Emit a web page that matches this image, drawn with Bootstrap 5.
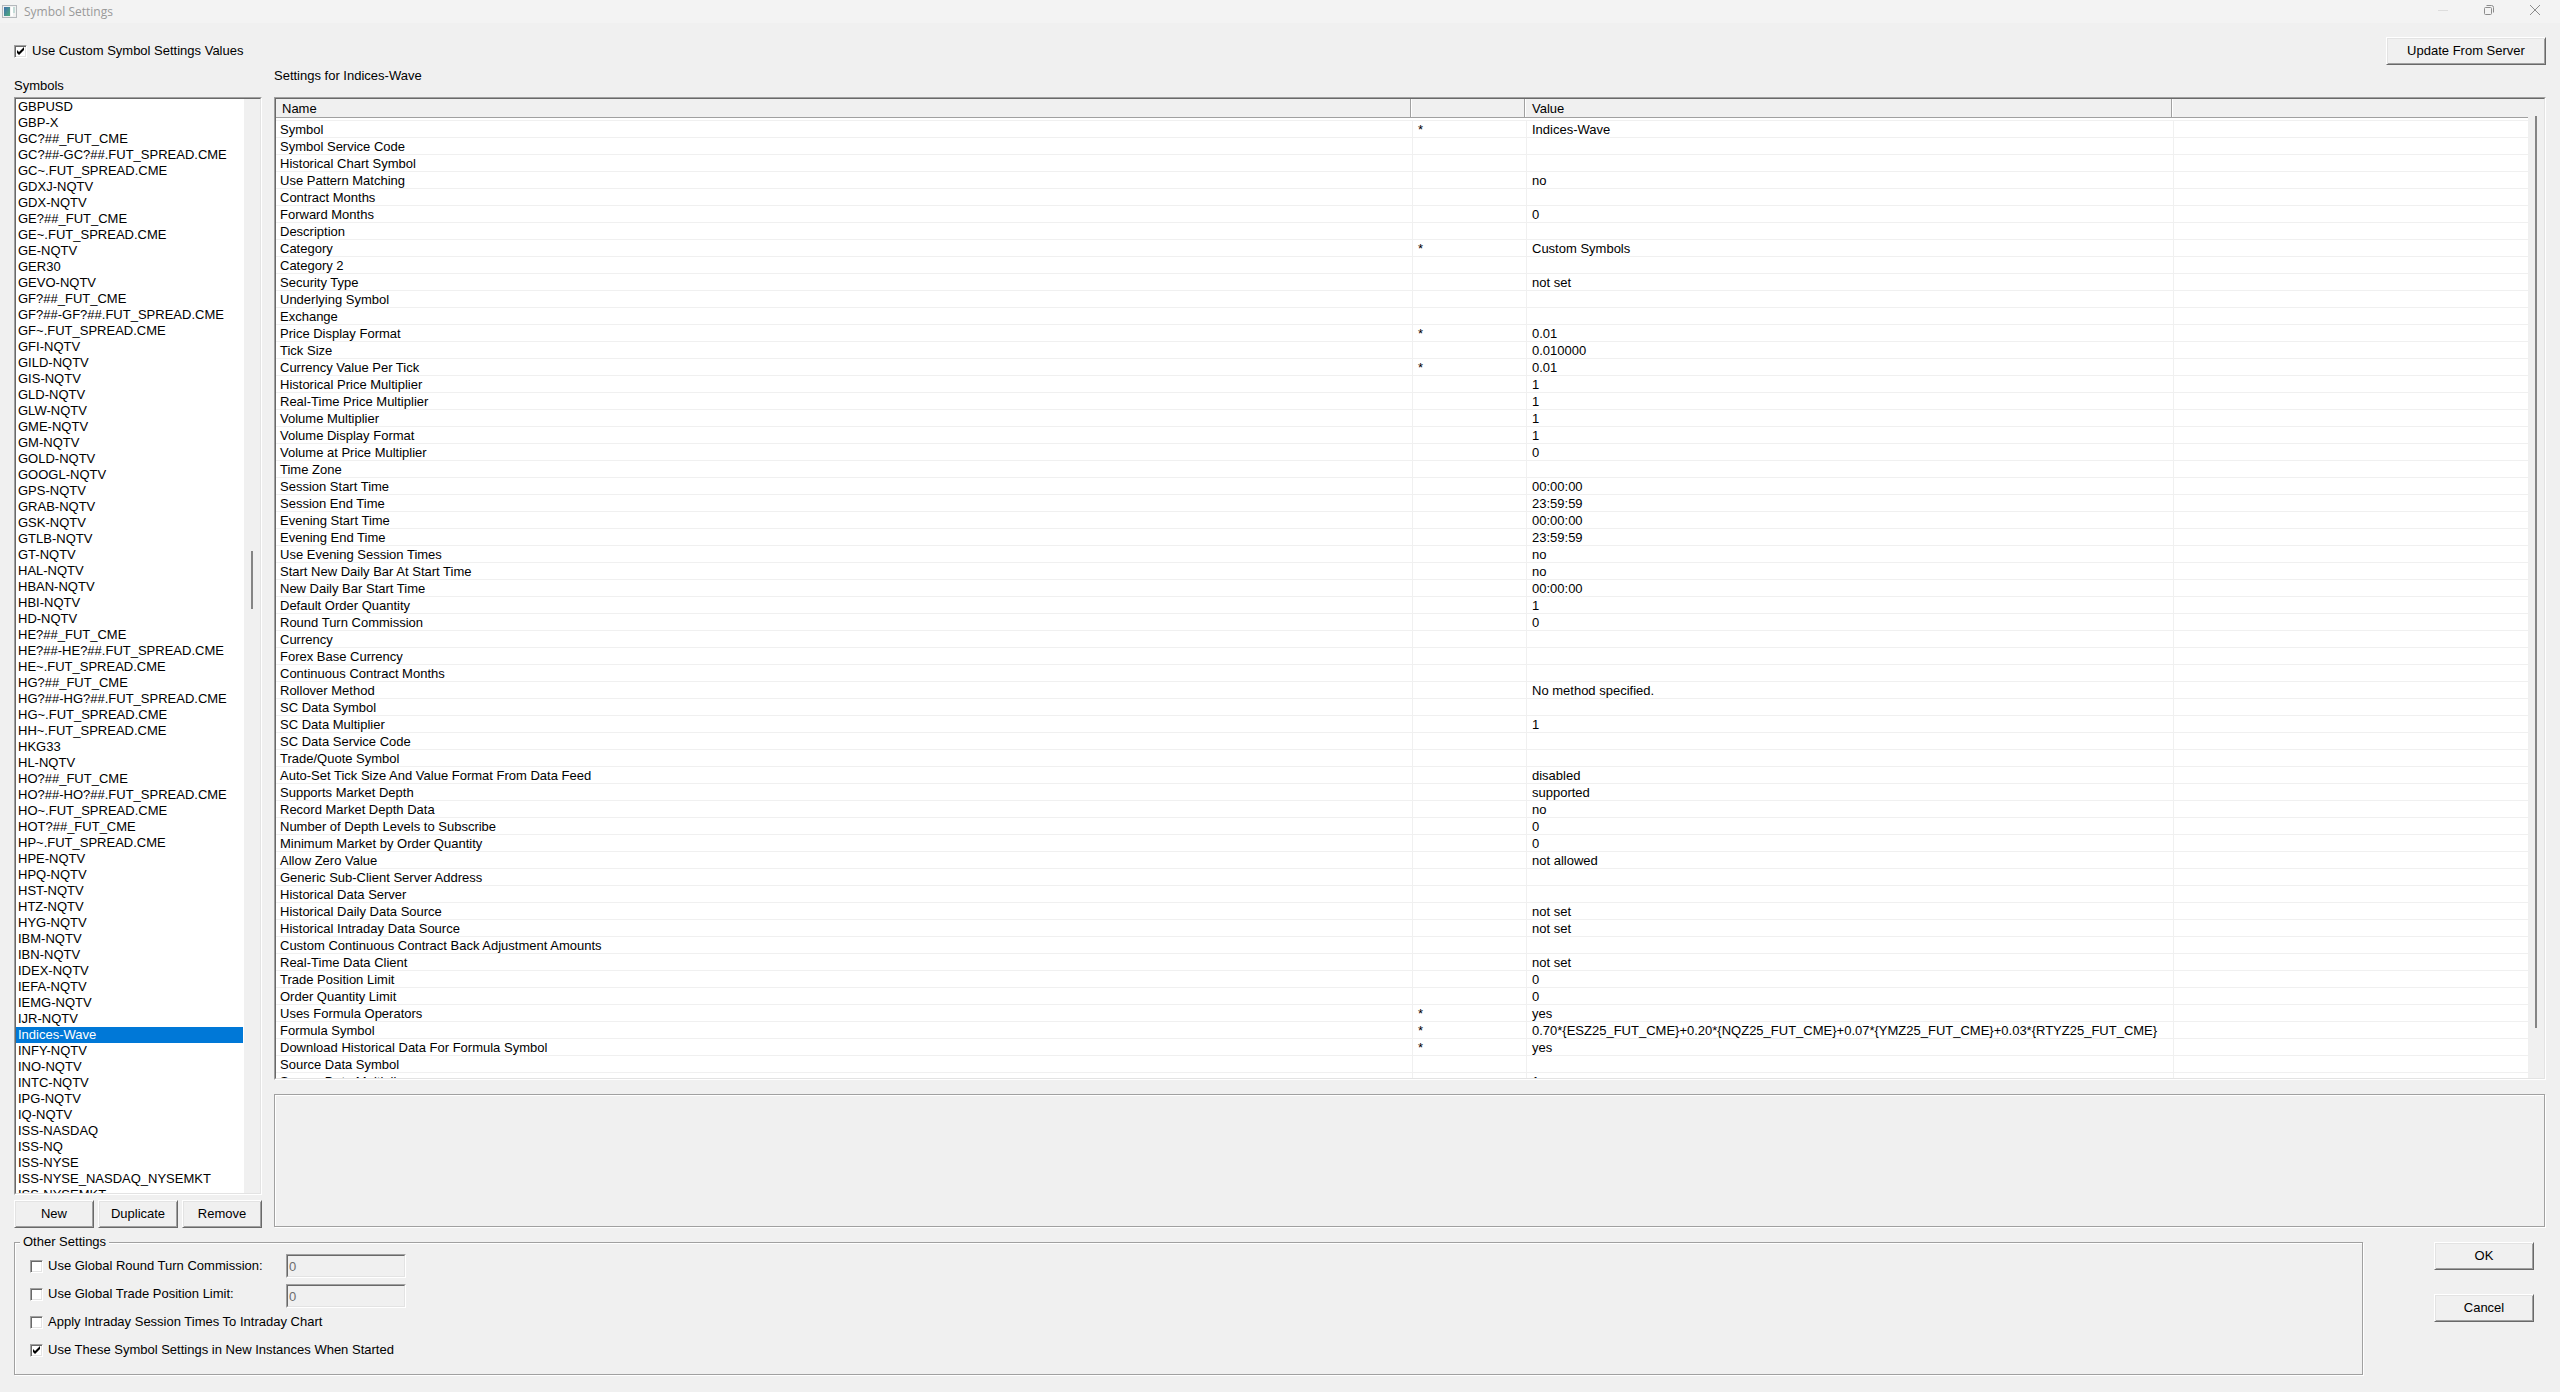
<!DOCTYPE html>
<html lang="en">
<head>
<meta charset="utf-8">
<meta name="viewport" content="width=device-width, initial-scale=1">
<title>Symbol Settings</title>
<link rel="stylesheet" href="https://cdn.jsdelivr.net/npm/bootstrap@5.3.0/dist/css/bootstrap.min.css">
<style>
body{font-family:"Liberation Sans",Arial,sans-serif;font-size:13px;line-height:16px;color:#000;background:#f0f0f0;overflow:hidden}
.titlebar{height:23px;background:#f3f3f3;color:#999;font-family:"Open Sans",sans-serif;font-size:12px;padding:0 2px;gap:6px}
.win-btns{height:20px}
.win-btn{border:0;background:none;padding:0;width:46px}
.toprow{height:51px;padding:14px 14px 0}
.top-label{gap:5px;padding-top:6px}
.btn-update{width:160px}
.main-area{padding:0 14px;gap:12px;min-height:0}
.left-pane{width:248px}
.pane-fill{min-height:0;min-width:0}
.cap-wrap{height:23px}
.cap-left{padding-top:4px}
.cap-right{margin-top:-6px}
.sunken{border:1px solid;border-color:#a0a0a0 #fff #fff #a0a0a0}
.sunken-in{border:1px solid;border-color:#696969 #e3e3e3 #e3e3e3 #696969}
.btn-win{font:inherit;color:#000;background:#f0f0f0;height:28px;padding:0 4px;border:1px solid;border-color:#fff #696969 #696969 #fff;box-shadow:inset 1px 1px #e3e3e3,inset -1px -1px #a0a0a0;border-radius:0}
.btn-win:active{background:#e8e8e8}
.list-btns{margin-top:5px}
.symbol-list{appearance:none;border:0;outline:0;background:#fff;border-radius:0;padding:0;margin:0;font:inherit;color:#000;overflow:hidden}
.symbol-list option{height:16px;min-height:16px;line-height:16px;padding:0 2px;margin-right:1px}
.symbol-list option:checked{background:#0078d7 linear-gradient(#0078d7,#0078d7);color:#fff !important}
.track{width:16px;background:#f0f0f0;position:relative}
.thumb{position:absolute;left:7px;width:2px;background:#858585}
.thumb-list{top:452px;height:58px}
.thumb-grid{top:17px;height:912px}
.grid-view{overflow:hidden;background:#fff}
.settings-table{table-layout:fixed;width:100%;border-collapse:separate;border-spacing:0}
.col-name{width:1137px}
.col-mark{width:114px}
.col-value{width:647px}
.settings-table th{font-weight:400;height:19px;padding:2px 0 0 5px;background:#f0f0f0;border-bottom:1px solid #a0a0a0;line-height:16px;box-shadow:inset -1px 0 #f0f0f0,inset -2px 0 #fff,inset -3px 0 #a0a0a0}
.settings-table th:first-child{padding-left:6px}
.settings-table th:last-child{box-shadow:none}
.settings-table td{height:17px;line-height:14px;padding:2px 5px 0;border-bottom:1px solid #f0f0f0;border-right:1px solid #f0f0f0;white-space:nowrap}
.settings-table td:first-child{padding-left:4px}
.settings-table td:last-child{border-right:0}
.settings-table .lead-row td{height:3px;line-height:0;padding:0;border-right:0}
.etched{border:1px solid #a0a0a0;box-shadow:1px 1px #fff,inset 1px 1px #fff}
.desc-box{height:133px;margin:14px 1px 1px 0}
.footer-area{padding:14px 26px 17px 14px}
.groupbox{height:133px;padding:9px 15px 0;margin:0;position:relative}
.groupbox legend{position:absolute;left:5px;top:-9px;width:auto;float:none;margin:0;padding:0 3px;font-size:13px;line-height:16px;background:#f0f0f0}
.opt-row{height:28px}
.opt-label{width:256px;gap:5px}
.opt-label.wide{width:auto}
.tick{appearance:none;width:13px;height:13px;margin:0;border:1px solid;border-color:#a0a0a0 #fff #fff #a0a0a0;background:#fff;box-shadow:inset 1px 1px #696969,inset -1px -1px #e3e3e3;flex:none}
.tick:checked{background:#fff url("data:image/svg+xml,%3Csvg xmlns='http://www.w3.org/2000/svg' viewBox='0 0 11 11'%3E%3Cpath d='M2 4v3l2 2 5-5V1L4 6z' fill='%23000'/%3E%3C/svg%3E") center/11px no-repeat}
.num-box{width:118px;height:22px;font:inherit;color:#6d6d6d;background:#f0f0f0;border:1px solid;border-color:#696969 #e3e3e3 #e3e3e3 #696969;outline:0;padding:0 1px}
.side-btns{width:100px;gap:24px;margin-left:71px}
</style>
<script src="https://cdn.jsdelivr.net/npm/bootstrap@5.3.0/dist/js/bootstrap.bundle.min.js"></script>
</head>
<body class="vh-100 d-flex flex-column">
<header class="titlebar d-flex align-items-center flex-shrink-0">
  <svg width="16" height="14" viewBox="0 0 16 14" aria-hidden="true"><defs><linearGradient id="g" x2="1" y2="1"><stop stop-color="#3f6fae"/><stop offset="1" stop-color="#4fae7b"/></linearGradient></defs><rect x=".5" y=".5" width="14" height="12" fill="#f1f1f1" stroke="#b4b8bc"/><rect x="2" y="2" width="6" height="9" fill="url(#g)"/><rect x="9" y="2" width="2" height="9" fill="#fff"/><rect x="11" y="2" width="2" height="6" fill="#c4dcd8"/></svg>
  <span class="flex-grow-1">Symbol Settings</span>
  <div class="win-btns d-flex align-self-start">
    <button class="win-btn d-flex justify-content-center align-items-center" aria-label="Minimize" disabled><svg width="10" height="10"><path d="M0 5.500h10" stroke="#ddd"/></svg></button>
    <button class="win-btn d-flex justify-content-center align-items-center" aria-label="Restore"><svg width="10" height="10" fill="none" stroke="#8c8c8c"><rect x=".5" y="2.500" width="7" height="7" rx="1"/><path d="M2.500 .5h5a2 2 0 0 1 2 2v5"/></svg></button>
    <button class="win-btn d-flex justify-content-center align-items-center" aria-label="Close"><svg width="10" height="10" stroke="#8c8c8c"><path d="M0 0l10 10M10 0L0 10"/></svg></button>
  </div>
</header>

<div class="toprow d-flex justify-content-between align-items-start flex-shrink-0">
  <label class="top-label d-flex align-items-center"><input class="tick" type="checkbox" checked>Use Custom Symbol Settings Values</label>
  <button class="btn-win btn-update">Update From Server</button>
</div>

<main class="main-area d-flex flex-grow-1">
  <section class="left-pane d-flex flex-column flex-shrink-0">
    <div class="cap-wrap flex-shrink-0"><label class="d-block cap-left" for="symbols">Symbols</label></div>
    <div class="sunken pane-fill flex-grow-1 d-flex">
      <div class="sunken-in d-flex flex-grow-1">
        <select class="symbol-list flex-grow-1 h-100" id="symbols" size="70"></select>
        <div class="track"><div class="thumb thumb-list"></div></div>
      </div>
    </div>
    <div class="list-btns d-flex gap-1 flex-shrink-0">
      <button class="btn-win flex-fill w-100">New</button>
      <button class="btn-win flex-fill w-100">Duplicate</button>
      <button class="btn-win flex-fill w-100">Remove</button>
    </div>
  </section>
  <section class="pane-fill d-flex flex-column flex-grow-1">
    <div class="cap-wrap flex-shrink-0"><div class="cap-right">Settings for Indices-Wave</div></div>
    <div class="sunken pane-fill flex-grow-1 d-flex">
      <div class="sunken-in pane-fill d-flex flex-grow-1">
        <div class="grid-view flex-grow-1">
          <table class="settings-table">
            <colgroup><col class="col-name"><col class="col-mark"><col class="col-value"><col></colgroup>
            <thead><tr><th>Name</th><th></th><th>Value</th><th></th></tr></thead>
            <tbody id="rows"><tr class="lead-row"><td colspan="4"></td></tr></tbody>
          </table>
        </div>
        <div class="track flex-shrink-0"><div class="thumb thumb-grid"></div></div>
      </div>
    </div>
    <div class="desc-box etched flex-shrink-0"></div>
  </section>
</main>

<footer class="footer-area d-flex flex-shrink-0">
  <fieldset class="groupbox etched flex-grow-1">
    <legend>Other Settings</legend>
    <div class="opt-row d-flex"><label class="opt-label d-flex align-items-center" for="c1"><input class="tick" type="checkbox" id="c1">Use Global Round Turn Commission:</label><div class="sunken align-self-center"><input class="num-box d-block" type="text" value="0" aria-label="Global round turn commission" disabled></div></div>
    <div class="opt-row d-flex"><label class="opt-label d-flex align-items-center" for="c2"><input class="tick" type="checkbox" id="c2">Use Global Trade Position Limit:</label><div class="sunken align-self-end"><input class="num-box d-block" type="text" value="0" aria-label="Global trade position limit" disabled></div></div>
    <div class="opt-row d-flex"><label class="opt-label wide d-flex align-items-center" for="c3"><input class="tick" type="checkbox" id="c3">Apply Intraday Session Times To Intraday Chart</label></div>
    <div class="opt-row d-flex"><label class="opt-label wide d-flex align-items-center" for="c4"><input class="tick" type="checkbox" id="c4" checked>Use These Symbol Settings in New Instances When Started</label></div>
  </fieldset>
  <div class="side-btns d-flex flex-column flex-shrink-0">
    <button class="btn-win">OK</button>
    <button class="btn-win">Cancel</button>
  </div>
</footer>

<script>
const symbols = `GBPUSD|GBP-X|GC?##_FUT_CME|GC?##-GC?##.FUT_SPREAD.CME|GC~.FUT_SPREAD.CME|GDXJ-NQTV|GDX-NQTV|GE?##_FUT_CME|GE~.FUT_SPREAD.CME|GE-NQTV|GER30|GEVO-NQTV|GF?##_FUT_CME|GF?##-GF?##.FUT_SPREAD.CME|GF~.FUT_SPREAD.CME|GFI-NQTV|GILD-NQTV|GIS-NQTV|GLD-NQTV|GLW-NQTV|GME-NQTV|GM-NQTV|GOLD-NQTV|GOOGL-NQTV|GPS-NQTV|GRAB-NQTV|GSK-NQTV|GTLB-NQTV|GT-NQTV|HAL-NQTV|HBAN-NQTV|HBI-NQTV|HD-NQTV|HE?##_FUT_CME|HE?##-HE?##.FUT_SPREAD.CME|HE~.FUT_SPREAD.CME|HG?##_FUT_CME|HG?##-HG?##.FUT_SPREAD.CME|HG~.FUT_SPREAD.CME|HH~.FUT_SPREAD.CME|HKG33|HL-NQTV|HO?##_FUT_CME|HO?##-HO?##.FUT_SPREAD.CME|HO~.FUT_SPREAD.CME|HOT?##_FUT_CME|HP~.FUT_SPREAD.CME|HPE-NQTV|HPQ-NQTV|HST-NQTV|HTZ-NQTV|HYG-NQTV|IBM-NQTV|IBN-NQTV|IDEX-NQTV|IEFA-NQTV|IEMG-NQTV|IJR-NQTV|Indices-Wave|INFY-NQTV|INO-NQTV|INTC-NQTV|IPG-NQTV|IQ-NQTV|ISS-NASDAQ|ISS-NQ|ISS-NYSE|ISS-NYSE_NASDAQ_NYSEMKT|ISS-NYSEMKT`.split('|');
const list = document.getElementById('symbols');
for (const s of symbols) list.add(new Option(s, s, s === 'Indices-Wave', s === 'Indices-Wave'));

// name ; changed marker ; value
const settings = `Symbol;*;Indices-Wave
Symbol Service Code
Historical Chart Symbol
Use Pattern Matching;;no
Contract Months
Forward Months;;0
Description
Category;*;Custom Symbols
Category 2
Security Type;;not set
Underlying Symbol
Exchange
Price Display Format;*;0.01
Tick Size;;0.010000
Currency Value Per Tick;*;0.01
Historical Price Multiplier;;1
Real-Time Price Multiplier;;1
Volume Multiplier;;1
Volume Display Format;;1
Volume at Price Multiplier;;0
Time Zone
Session Start Time;;00:00:00
Session End Time;;23:59:59
Evening Start Time;;00:00:00
Evening End Time;;23:59:59
Use Evening Session Times;;no
Start New Daily Bar At Start Time;;no
New Daily Bar Start Time;;00:00:00
Default Order Quantity;;1
Round Turn Commission;;0
Currency
Forex Base Currency
Continuous Contract Months
Rollover Method;;No method specified.
SC Data Symbol
SC Data Multiplier;;1
SC Data Service Code
Trade/Quote Symbol
Auto-Set Tick Size And Value Format From Data Feed;;disabled
Supports Market Depth;;supported
Record Market Depth Data;;no
Number of Depth Levels to Subscribe;;0
Minimum Market by Order Quantity;;0
Allow Zero Value;;not allowed
Generic Sub-Client Server Address
Historical Data Server
Historical Daily Data Source;;not set
Historical Intraday Data Source;;not set
Custom Continuous Contract Back Adjustment Amounts
Real-Time Data Client;;not set
Trade Position Limit;;0
Order Quantity Limit;;0
Uses Formula Operators;*;yes
Formula Symbol;*;0.70*{ESZ25_FUT_CME}+0.20*{NQZ25_FUT_CME}+0.07*{YMZ25_FUT_CME}+0.03*{RTYZ25_FUT_CME}
Download Historical Data For Formula Symbol;*;yes
Source Data Symbol
Source Data Multiplier;;1`.split('\n');
const rows = document.getElementById('rows');
for (const line of settings) {
  const [name, mark = '', value = ''] = line.split(';');
  const tr = rows.insertRow();
  for (const t of [name, mark, value, '']) tr.insertCell().textContent = t;
}
</script>
</body>
</html>
